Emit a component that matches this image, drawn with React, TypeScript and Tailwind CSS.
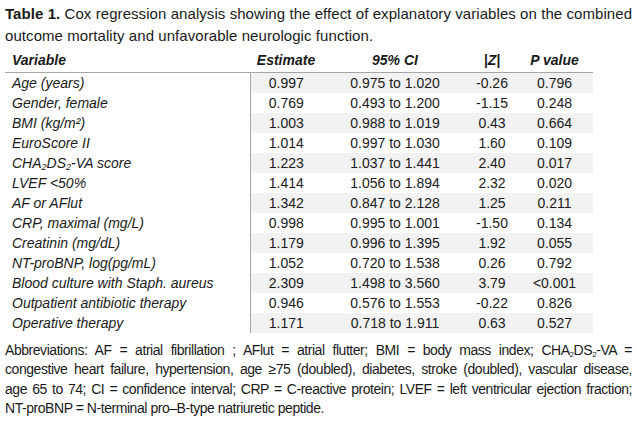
import React from 'react';

interface Row {
  variable: React.ReactNode;
  estimate: string;
  ci: string;
  z: string;
  p: string;
}

const rows: Row[] = [
  { variable: 'Age (years)', estimate: '0.997', ci: '0.975 to 1.020', z: '-0.26', p: '0.796' },
  { variable: 'Gender, female', estimate: '0.769', ci: '0.493 to 1.200', z: '-1.15', p: '0.248' },
  { variable: 'BMI (kg/m²)', estimate: '1.003', ci: '0.988 to 1.019', z: '0.43', p: '0.664' },
  { variable: 'EuroScore II', estimate: '1.014', ci: '0.997 to 1.030', z: '1.60', p: '0.109' },
  {
    variable: (
      <>
        CHA<sub className="text-[9px]">2</sub>DS<sub className="text-[9px]">2</sub>-VA score
      </>
    ),
    estimate: '1.223',
    ci: '1.037 to 1.441',
    z: '2.40',
    p: '0.017',
  },
  { variable: 'LVEF <50%', estimate: '1.414', ci: '1.056 to 1.894', z: '2.32', p: '0.020' },
  { variable: 'AF or AFlut', estimate: '1.342', ci: '0.847 to 2.128', z: '1.25', p: '0.211' },
  { variable: 'CRP, maximal (mg/L)', estimate: '0.998', ci: '0.995 to 1.001', z: '-1.50', p: '0.134' },
  { variable: 'Creatinin (mg/dL)', estimate: '1.179', ci: '0.996 to 1.395', z: '1.92', p: '0.055' },
  { variable: 'NT-proBNP, log(pg/mL)', estimate: '1.052', ci: '0.720 to 1.538', z: '0.26', p: '0.792' },
  { variable: 'Blood culture with Staph. aureus', estimate: '2.309', ci: '1.498 to 3.560', z: '3.79', p: '<0.001' },
  { variable: 'Outpatient antibiotic therapy', estimate: '0.946', ci: '0.576 to 1.553', z: '-0.22', p: '0.826' },
  { variable: 'Operative therapy', estimate: '1.171', ci: '0.718 to 1.911', z: '0.63', p: '0.527' },
];

const justifyLine = 'text-justify [text-align-last:justify]';

export default function App() {
  return (
    <div className="w-[637px] h-[421px] bg-white text-[#1a1a1a] font-['Liberation_Sans',Arial,sans-serif] overflow-hidden">
      {/* Caption */}
      <p className="px-[5px] pt-[3px] text-[15px] leading-[22px] whitespace-nowrap tracking-[0.07px]">
        <span className="font-bold">Table 1.</span> Cox regression analysis showing the effect of explanatory variables on the combined
        <br />
        outcome mortality and unfavorable neurologic function.
      </p>

      {/* Table */}
      <table className="ml-[5px] mt-[3px] w-[588px] border-collapse text-[14px] table-fixed">
        <colgroup>
          <col className="w-[245px]" />
          <col className="w-[72px]" />
          <col className="w-[146px]" />
          <col className="w-[48px]" />
          <col className="w-[77px]" />
        </colgroup>
        <thead>
          <tr className="h-[22px] border-b border-[#a6a6a6] italic font-bold">
            <th className="pl-[7px] text-left">Variable</th>
            <th className="text-center">Estimate</th>
            <th className="text-center">95% CI</th>
            <th className="text-center">|Z|</th>
            <th className="text-center">P value</th>
          </tr>
        </thead>
        <tbody>
          {rows.map((row, i) => {
            const shade = i % 2 === 0 ? 'bg-[#f2f2f2]' : '';
            return (
              <tr key={i} className="h-[20px] leading-[20px]">
                <td className="pl-[7px] italic border-r border-[#a6a6a6] whitespace-nowrap">{row.variable}</td>
                <td className={`text-center ${shade}`}>{row.estimate}</td>
                <td className={`text-center ${shade}`}>{row.ci}</td>
                <td className={`text-center ${shade}`}>{row.z}</td>
                <td className={`text-center ${shade}`}>{row.p}</td>
              </tr>
            );
          })}
        </tbody>
      </table>

      {/* Footnote */}
      <div className="px-[5px] pt-[8px] text-[14px] leading-[19.5px] tracking-[-0.45px]">
        <p className={justifyLine}>
          Abbreviations: AF = atrial fibrillation ; AFlut = atrial flutter; BMI = body mass index; CHA
          <sub className="text-[8px]">2</sub>DS<sub className="text-[8px]">2</sub>-VA =
        </p>
        <p className={justifyLine}>
          congestive heart failure, hypertension, age ≥75 (doubled), diabetes, stroke (doubled), vascular disease,
        </p>
        <p className={justifyLine}>
          age 65 to 74; CI = confidence interval; CRP = C-reactive protein; LVEF = left ventricular ejection fraction;
        </p>
        <p>NT-proBNP = N-terminal pro–B-type natriuretic peptide.</p>
      </div>
    </div>
  );
}
